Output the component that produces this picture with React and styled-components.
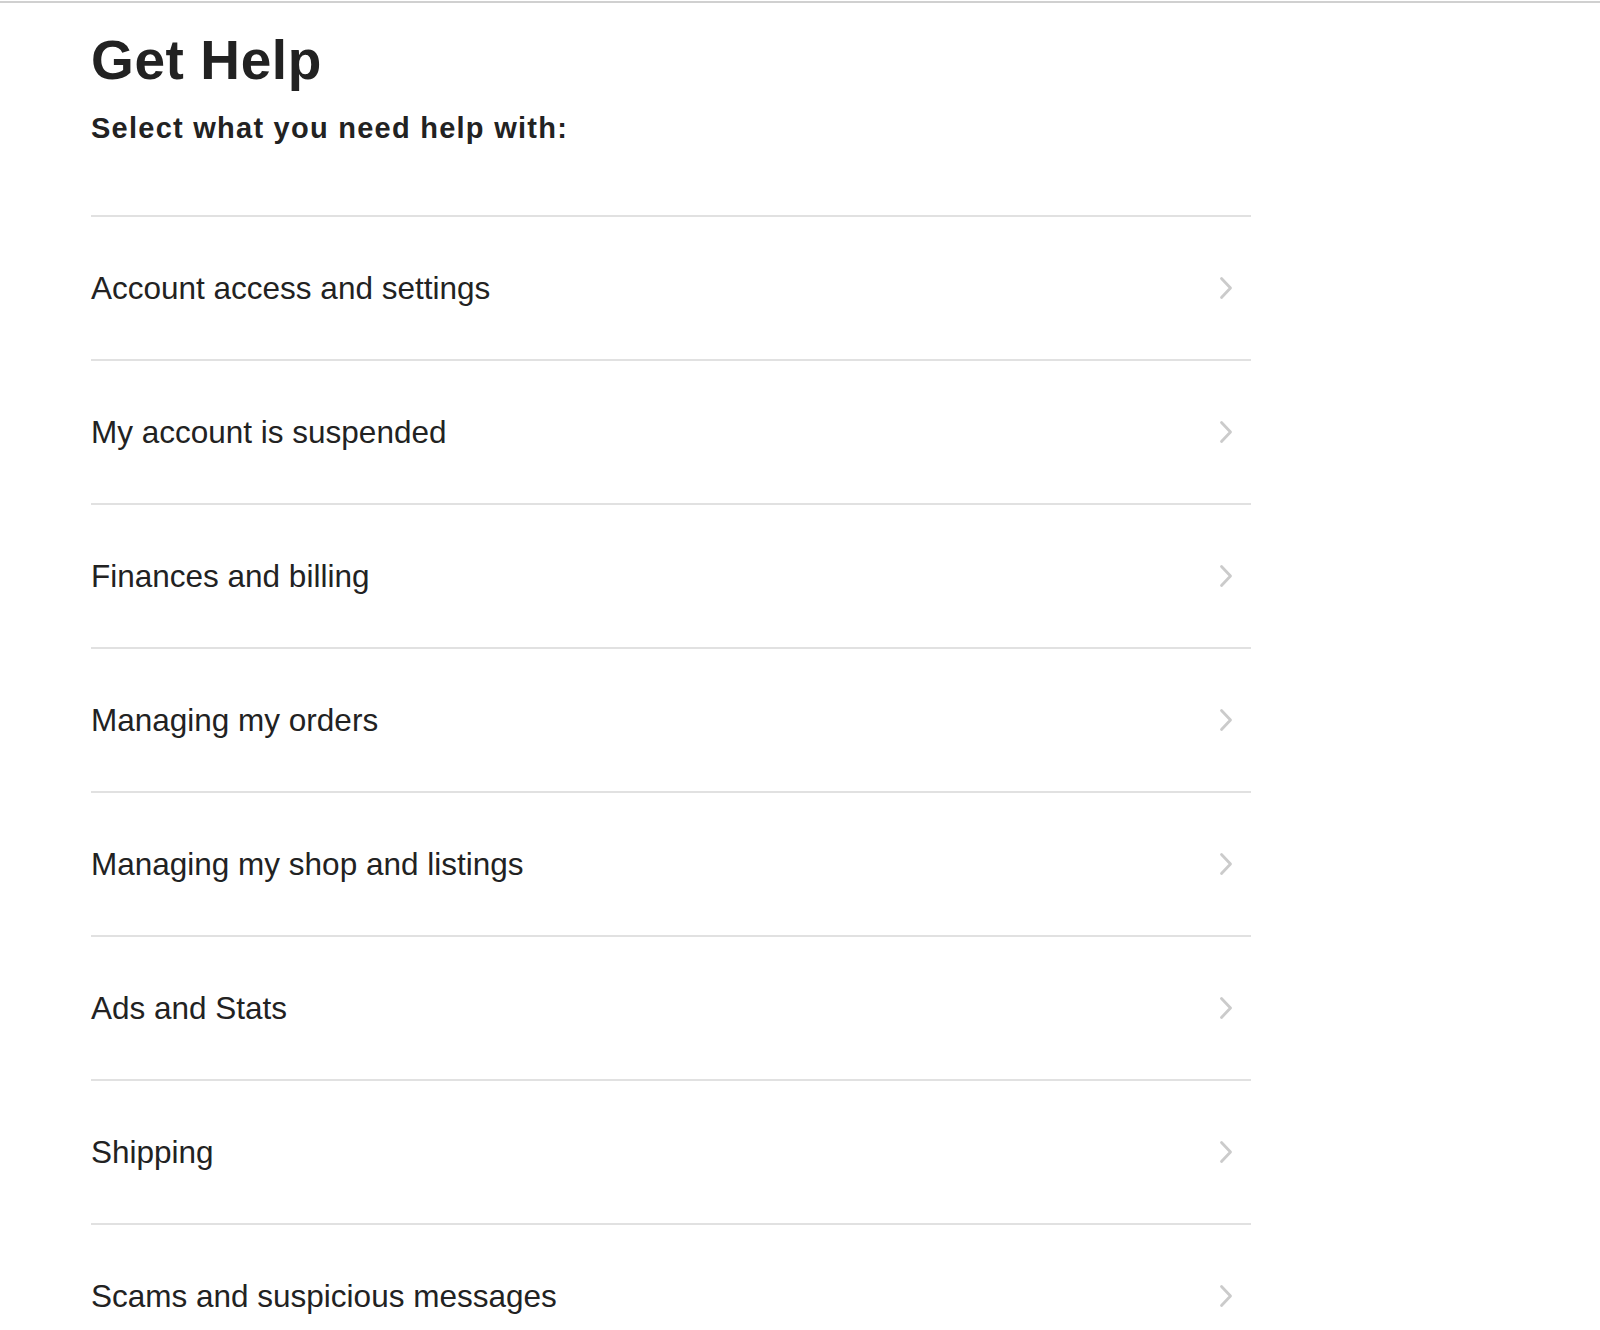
import React from 'react';
import styled, { createGlobalStyle } from 'styled-components';

const GlobalStyle = createGlobalStyle`
	html, body {
		margin: 0;
		padding: 0;
		background: #fff;
	}
	body {
		font-family: 'Liberation Sans', Arial, sans-serif;
		color: #222;
	}
`;

const TopRule = styled.div`
	margin-top: 1px;
	height: 2px;
	background: #d0d0d0;
`;

const Page = styled.main`
	width: 1160px;
	padding-left: 91px;
`;

const Title = styled.h1`
	margin: 30px 0 0;
	font-size: 55px;
	line-height: 55px;
	font-weight: 700;
	letter-spacing: 0.6px;
	color: #222;
`;

const Subtitle = styled.p`
	margin: 26px 0 0;
	font-size: 29px;
	line-height: 29px;
	font-weight: 700;
	letter-spacing: 1.25px;
	color: #222;
`;

const TopicList = styled.ul`
	list-style: none;
	margin: 72px 0 0;
	padding: 0;
`;

const TopicRow = styled.li`
	display: flex;
	align-items: center;
	justify-content: space-between;
	height: 142px;
	padding-right: 18px;
	border-top: 2px solid #e1e1e1;
	font-size: 31.5px;
	color: #222;
	cursor: pointer;
`;

const Chevron = () => (
	<svg width="14" height="24" viewBox="0 0 14 24" fill="none">
		<path
			d="M2.5 2.5 L11.5 12 L2.5 21.5"
			stroke="#cbcbcb"
			strokeWidth="2.8"
			strokeLinecap="round"
			strokeLinejoin="round"
		/>
	</svg>
);

const topics = [
	'Account access and settings',
	'My account is suspended',
	'Finances and billing',
	'Managing my orders',
	'Managing my shop and listings',
	'Ads and Stats',
	'Shipping',
	'Scams and suspicious messages',
];

const App = () => {
	return (
		<>
			<GlobalStyle />
			<TopRule />
			<Page>
				<Title>Get Help</Title>
				<Subtitle>Select what you need help with:</Subtitle>
				<TopicList>
					{topics.map((topic) => (
						<TopicRow key={topic}>
							{topic}
							<Chevron />
						</TopicRow>
					))}
				</TopicList>
			</Page>
		</>
	);
};

export default App;
